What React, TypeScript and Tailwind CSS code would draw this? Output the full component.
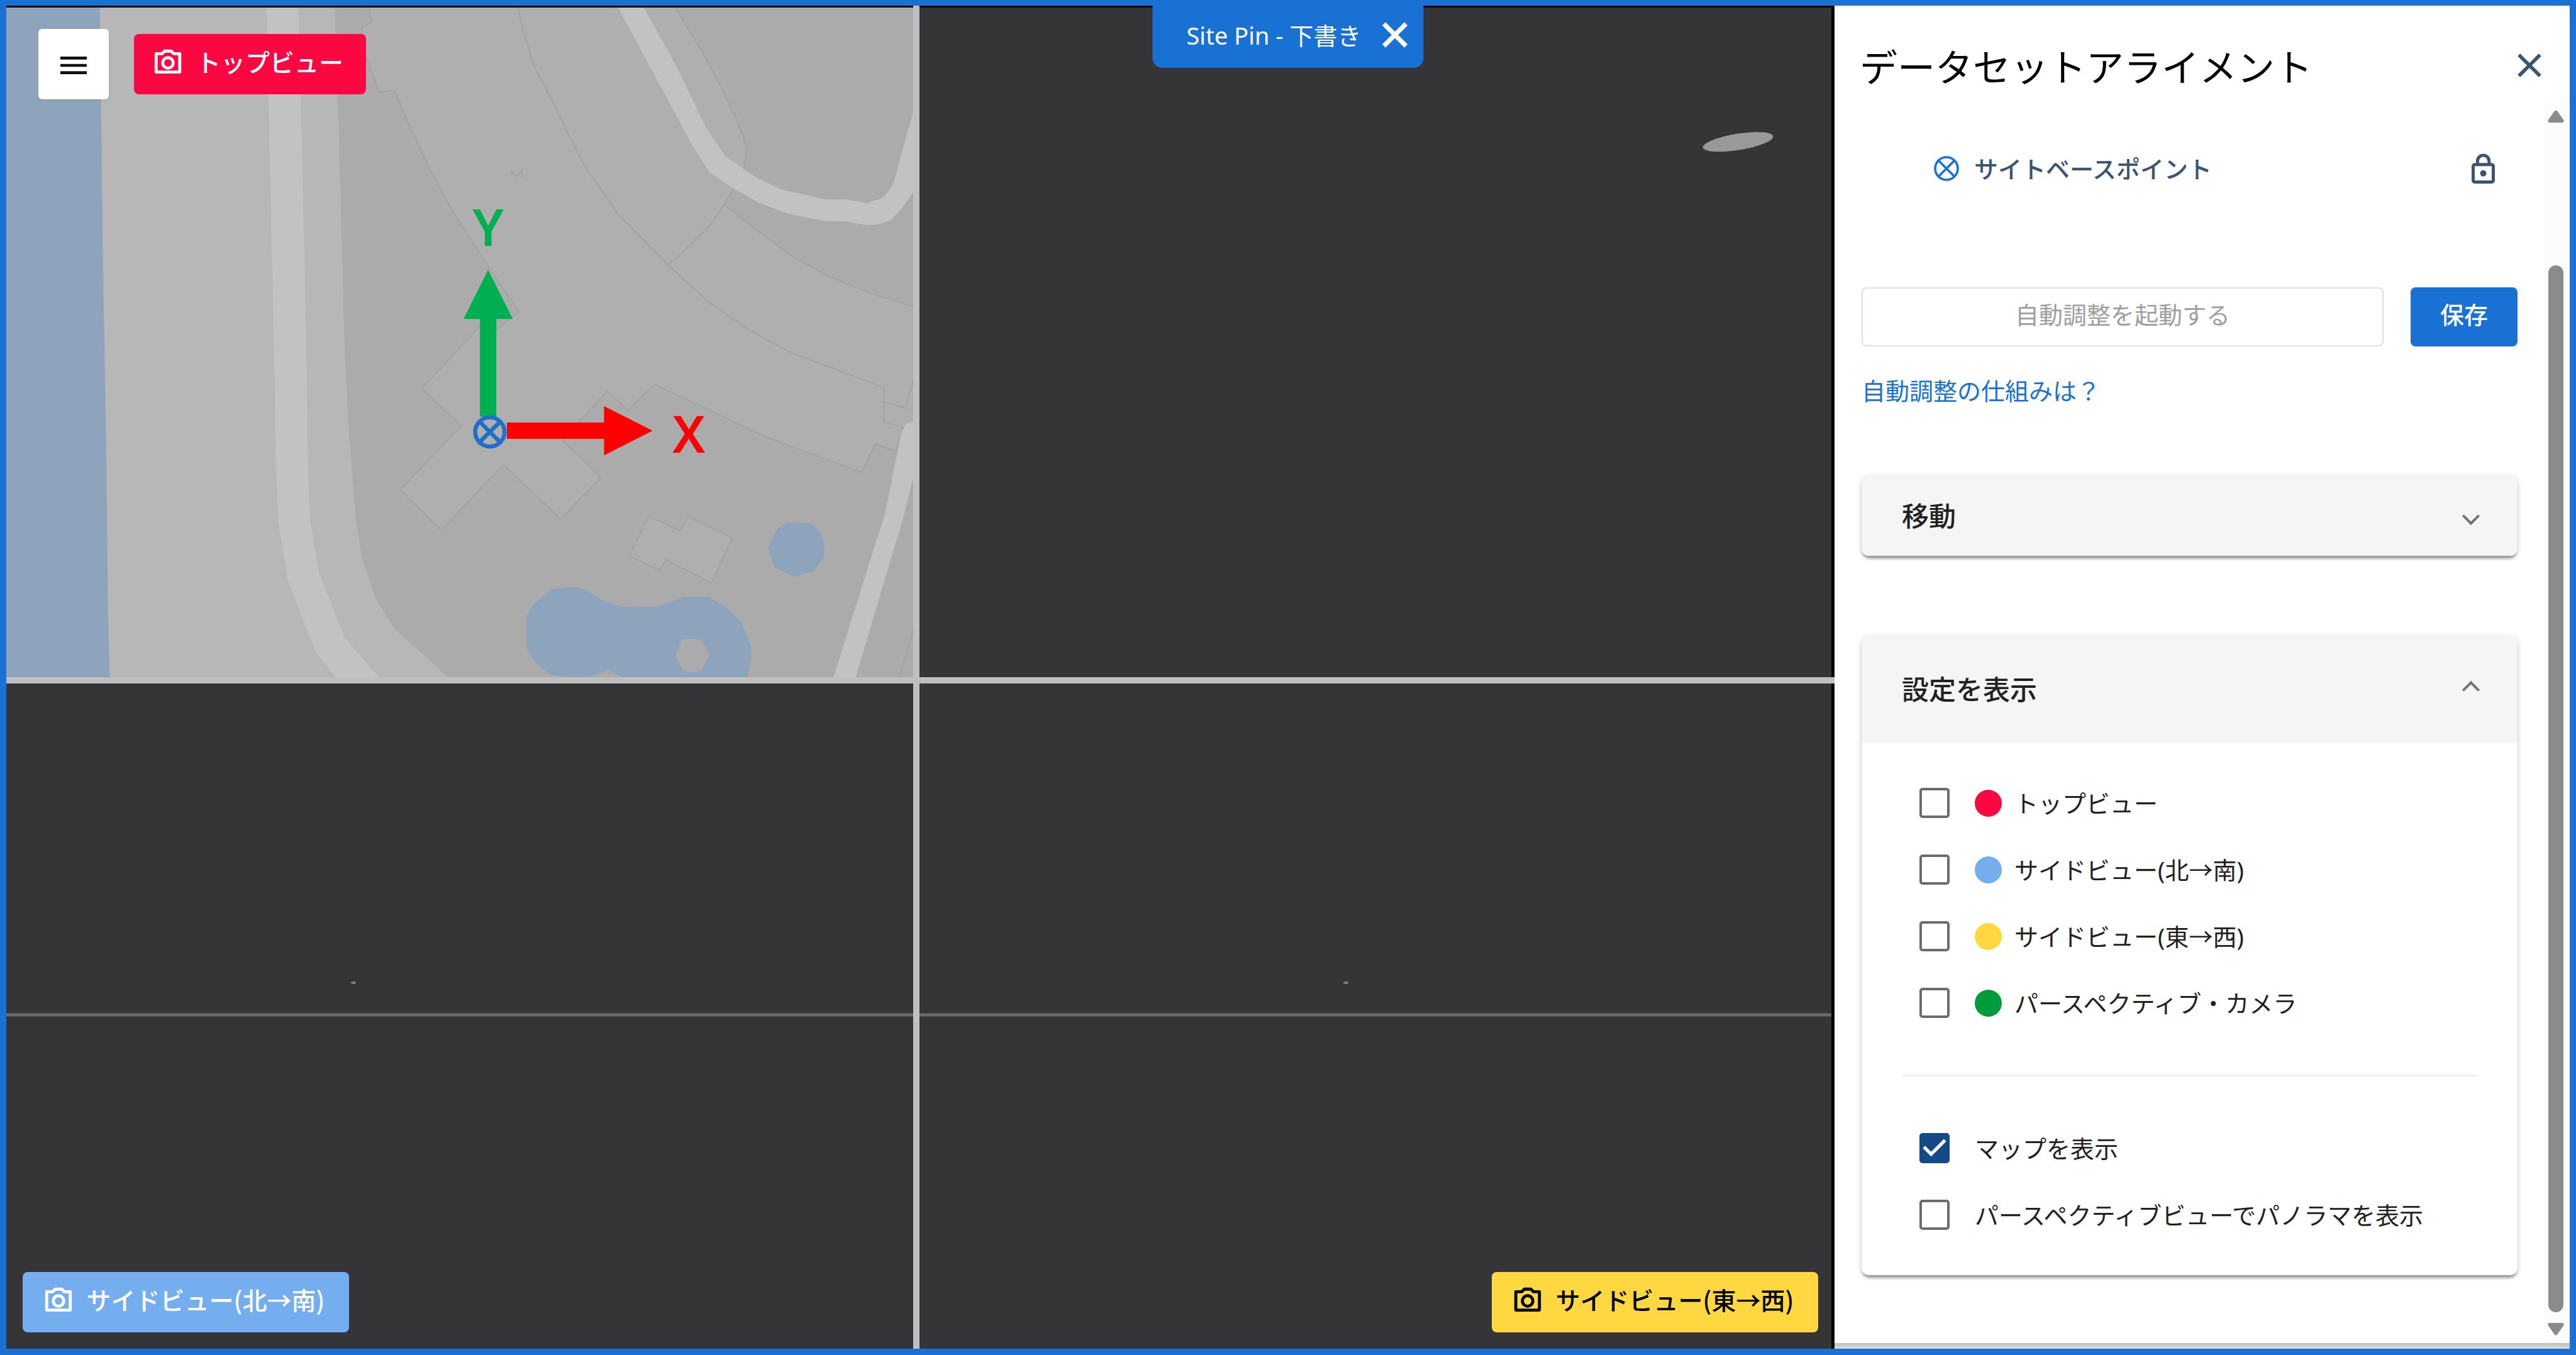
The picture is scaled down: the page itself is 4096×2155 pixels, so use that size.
import { useState } from "react";
import type { ReactNode } from "react";
import { MdMenu } from "react-icons/md";

interface ViewOption {
  id: string;
  label: string;
  dot?: string;
}

const VIEW_OPTIONS: ViewOption[] = [
  { id: "top", label: "トップビュー", dot: "bg-[#fb0842]" },
  { id: "side-ns", label: "サイドビュー(北→南)", dot: "bg-[#75aeef]" },
  { id: "side-ew", label: "サイドビュー(東→西)", dot: "bg-[#ffd740]" },
  { id: "perspective", label: "パースペクティブ・カメラ", dot: "bg-[#009c3b]" },
];

const LAYER_OPTIONS: ViewOption[] = [
  { id: "map", label: "マップを表示" },
  { id: "panorama", label: "パースペクティブビューでパノラマを表示" },
];

function CameraIcon() {
  return (
    <svg
      viewBox="0 0 24 24"
      className="size-[50px] shrink-0"
      fill="none"
      stroke="currentColor"
      strokeWidth="2.3"
      strokeLinejoin="round"
    >
      <path d="M3 5h4.600L9.450 3h5.100L16.400 5H21v14H3z" />
      <circle cx="12" cy="12" r="4" />
    </svg>
  );
}

function CloseIcon({ className, weight }: { className: string; weight: number }) {
  return (
    <svg viewBox="0 0 24 24" className={className} fill="none" stroke="currentColor" strokeWidth={weight}>
      <path d="M5.700 5.700l12.600 12.600M18.300 5.700L5.700 18.300" />
    </svg>
  );
}

function BasePointIcon({ className }: { className?: string }) {
  return (
    <svg viewBox="0 0 40 40" className={className} fill="none" stroke="#1871d3" strokeWidth="3.6">
      <circle cx="20" cy="20" r="18" />
      <path d="M7.5 7.5l25 25M32.5 7.5l-25 25" />
    </svg>
  );
}

function LockIcon() {
  return (
    <svg viewBox="0 0 40 52" className="h-12 w-[37px]" fill="none" stroke="#3b5470" strokeWidth="5.4">
      <rect x="2.7" y="19.3" width="34.6" height="30" rx="2.5" />
      <path d="M10.2 18v-4.9a9.9 9.9 0 0 1 19.8 0V18" />
      <circle cx="20" cy="34.3" r="5.4" fill="#3b5470" stroke="none" />
    </svg>
  );
}

function SiteMap() {
  return (
    <svg
      viewBox="11 13 1549 1144"
      preserveAspectRatio="none"
      className="absolute inset-0 h-full w-full"
      aria-hidden="true"
    >
      <rect x="0" y="0" width="1570" height="1170" fill="#ababab" />

      {/* building footprint */}
      <path
        d="M630 13L635 38L618 47L622 90L648 158L674 154L698 211L736 293L776 365L834 455L887 532L850 562L820 557L721 664L788 728L684 837L754 906L860 794L958 887L1026 816L962 753L985 726L1037 668L1072 701L1118 657L1219 704L1310 747L1472 807L1495 759L1531 771L1542 730L1561 720V524L1481 499L1411 470L1350 436L1290 391L1237 350L1255 320L1272 286L1275 256L1270 233L1244 173L1199 87L1153 13Z"
        fill="#afafaf"
      />
      <g fill="none" stroke="#a4a4a4" strokeWidth="2.500">
        <path d="M630 13L635 38L618 47L622 90L648 158L674 154L698 211L736 293L776 365L834 455L887 532L850 562L820 557L721 664L788 728L684 837L754 906L860 794L958 887L1026 816L962 753L985 726L1037 668L1072 701L1118 657L1219 704L1310 747L1472 807L1495 759L1531 771L1542 730L1510 720V662L1350 602L1280 564L1214 519L1142 453L1058 369L998 282L969 226L942 169L912 113L892 45L885 13" />
        <path d="M1510 686L1547 697L1561 647" />
        <path d="M1142 453L1184 414L1214 384L1237 350L1290 391L1350 436L1411 470L1481 499L1561 524" />
        <path d="M1153 13L1199 87L1244 173L1270 233L1275 256L1272 286L1255 320L1237 350" />
        <path d="M1561 1076L1536 1157" />
        <path d="M874 302V293L882 301L892 292V303" />
      </g>
      <path
        d="M1109 882L1162 907L1175 882L1251 919L1216 996L1138 956L1127 974L1075 950Z"
        fill="#afafaf"
        stroke="#a4a4a4"
        strokeWidth="2.500"
      />

      {/* shore */}
      <path
        d="M0 0H572V13L579 226L589 602L597 753L607 873L609 896L618 952L641 1020L672 1072L741 1135L776 1170H0Z"
        fill="#b7b7b7"
      />
      <path d="M0 0H171V13L175 376L181 722L185 1054L188 1170H0Z" fill="#8ea3bc" />

      {/* roads */}
      <g fill="#c2c2c2">
        <path d="M456 13L460 226L464 406L470 677L472 813L476 896L492 993L540 1114L576 1160H650L589 1090L545 978L530 888L527 828L522 527L516 256L510 13Z" />
        <path d="M1056 13L1118 128L1181 245L1211 293L1250 320L1295 346L1345 365L1411 378H1446L1481 385Q1505 384 1522 376L1542 354L1561 327V188L1542 256L1527 312Q1518 330 1506 339L1481 347L1446 341H1411L1335 324L1295 305L1239 267L1206 218L1159 120L1100 13Z" />
        <path d="M1561 721Q1551 720 1547 726L1540 738L1512 877L1423 1160H1461L1542 888L1561 813Z" />
      </g>

      {/* ponds */}
      <g fill="#8ea3bc">
        <path d="M1345 893H1368L1386 896L1400 907L1408 925V952L1391 975L1357 986L1323 969L1312 937L1328 903Z" />
        <path d="M942 1007L982 1002L1006 1010L1028 1025L1063 1037L1124 1036L1167 1020H1211L1239 1036L1267 1063L1284 1108L1283 1129L1276 1160H1070L1039 1145L1011 1155L977 1158L942 1153L915 1133L899 1105V1054L912 1031Z" />
      </g>
      <path d="M1164 1093L1180 1091L1197 1093L1212 1118L1199 1145L1184 1149L1167 1146L1154 1121Z" fill="#ababab" />

      {/* axes */}
      <path d="M820 712V545H792L834 461L876 545H848V712Z" fill="#00b050" />
      <path d="M866 722H1032V694L1115 736L1032 778V750H866Z" fill="#ff0000" />
      <g fill="none" stroke="#1f70c8" strokeWidth="7">
        <circle cx="837" cy="738" r="25" />
        <path d="M820 721l34 34M854 721l-34 34" />
      </g>
      <g className="font-semibold" fontFamily="'Noto Sans', sans-serif" fontSize="88" textAnchor="middle">
        <text x="834" y="420" fill="#00b050">
          Y
        </text>
        <text x="1177" y="773" fill="#ff0000">
          X
        </text>
      </g>
    </svg>
  );
}

function ViewButton({ className, children }: { className: string; children: ReactNode }) {
  return (
    <button
      type="button"
      className={`flex h-24 items-center justify-center gap-5 rounded-lg pr-9 pb-1 pl-[29px] font-['Noto_Sans_CJK_JP',sans-serif] text-[39px] font-medium ${className}`}
    >
      <CameraIcon />
      <span className="pb-1.5">{children}</span>
    </button>
  );
}

function Horizon({ className }: { className: string }) {
  return (
    <div className="absolute inset-x-0 top-[49.5%]">
      <div className="h-1.5 border-y border-[#505052] bg-[#69696b]" />
      <div className={`absolute -top-[50px] h-1 w-2 rounded-full bg-[#7a7a7c] ${className}`} />
    </div>
  );
}

function CheckRow({
  option,
  checked,
  onToggle,
}: {
  option: ViewOption;
  checked: boolean;
  onToggle: (id: string) => void;
}) {
  return (
    <label className="flex h-[106px] items-center gap-10 pl-7 text-[#212121]">
      <span className="relative size-12 shrink-0">
        <input
          type="checkbox"
          checked={checked}
          onChange={() => onToggle(option.id)}
          className="block size-12 appearance-none rounded-[5px] border-4 border-[#6c6c6c] bg-white checked:border-[#154a88] checked:bg-[#154a88]"
        />
        {checked && (
          <svg viewBox="3 3 18 18" className="pointer-events-none absolute inset-0 size-12" fill="#fff">
            <path d="M10 17l-5-5 1.41-1.41L10 14.17l7.59-7.59L19 8l-9 9z" />
          </svg>
        )}
      </span>
      <span className="flex items-center gap-5">
        {option.dot && <span className={`size-[43px] rounded-full ${option.dot}`} />}
        {option.label}
      </span>
    </label>
  );
}

function Accordion({
  title,
  open,
  onToggle,
  children,
}: {
  title: string;
  open: boolean;
  onToggle: () => void;
  children?: ReactNode;
}) {
  return (
    <section className="overflow-hidden rounded-xl bg-white shadow-[0_6px_4px_-2px_rgba(0,0,0,0.35),0_2px_8px_rgba(0,0,0,0.2)]">
      <button
        type="button"
        onClick={onToggle}
        aria-expanded={open}
        className={`flex w-full items-center justify-between bg-[#f5f5f5] px-16 text-left text-[43px] font-medium text-[#212121] ${
          open ? "h-[169px]" : "h-[127px]"
        }`}
      >
        {title}
        <span
          className={`size-5 border-r-4 border-b-4 border-[#757575] ${open ? "rotate-225" : "rotate-45"}`}
        />
      </button>
      {open && children}
    </section>
  );
}

export default function App() {
  const [checked, setChecked] = useState<string[]>(["map"]);
  const [moveOpen, setMoveOpen] = useState(false);
  const [displayOpen, setDisplayOpen] = useState(true);

  const toggle = (id: string) =>
    setChecked((prev) => (prev.includes(id) ? prev.filter((v) => v !== id) : [...prev, id]));

  return (
    <div className="relative flex h-screen w-full overflow-hidden border-[10px] border-t-[9px] border-[#1871d3] font-['Noto_Sans','Noto_Sans_CJK_JP',sans-serif] text-[38px] leading-[56px]">
      <main className="grid min-w-0 flex-1 grid-cols-[1442fr_1455fr] grid-rows-[1068fr_1058fr] gap-[10px] bg-[#bfbfbf]">
        <section className="relative min-h-0 overflow-hidden border-t-[3px] border-black">
          <SiteMap />
          <div className="relative flex items-center gap-10 pt-[34px] pl-[51px]">
            <button
              type="button"
              aria-label="メニュー"
              className="flex size-28 items-center justify-center rounded-md bg-white pt-1 text-[#111] shadow-sm"
            >
              <MdMenu className="size-14" />
            </button>
            <ViewButton className="bg-[#fb0842] text-white">トップビュー</ViewButton>
          </div>
        </section>

        <section className="relative min-h-0 overflow-hidden border-t-[3px] border-r-[5px] border-black bg-[#353537]">
          <svg viewBox="0 0 124 36" className="absolute top-[18.5%] left-[85.8%] w-[115px]">
            <ellipse cx="62" cy="18" rx="61" ry="14" fill="#999" transform="rotate(-9 62 18)" />
          </svg>
        </section>

        <section className="relative flex min-h-0 items-end overflow-hidden bg-[#353537] p-[26px]">
          <Horizon className="left-[38%]" />
          <ViewButton className="relative min-w-[519px] bg-[#75aeef] text-white">
            サイドビュー(北→南)
          </ViewButton>
        </section>

        <section className="relative flex min-h-0 items-end justify-end overflow-hidden border-r-[5px] border-black bg-[#353537] p-[26px] pr-[21px]">
          <Horizon className="left-[46.5%]" />
          <ViewButton className="relative min-w-[519px] bg-[#ffd740] text-black">
            サイドビュー(東→西)
          </ViewButton>
        </section>
      </main>

      <aside className="flex w-[1169px] shrink-0 flex-col bg-white">
        <header className="flex h-[153px] shrink-0 items-center justify-between pt-9 pr-8 pl-10">
          <h1 className="pt-1.5 text-[60px] leading-[80px] text-black">データセットアライメント</h1>
          <button type="button" aria-label="閉じる" className="text-[#3b5470]">
            <CloseIcon className="size-16" weight={2.1} />
          </button>
        </header>

        <div className="flex min-h-0 flex-1">
          <div className="min-w-0 flex-1 px-[43px] pt-16">
            <div className="flex h-[88px] items-center gap-6 pr-9 pb-1 pl-[115px] font-medium text-[#3b5470]">
              <BasePointIcon className="size-10" />
              <span className="flex-1">サイトベースポイント</span>
              <button type="button" aria-label="ロック">
                <LockIcon />
              </button>
            </div>

            <div className="mt-[143px] flex h-[94px] gap-[43px]">
              <button
                type="button"
                disabled
                className="flex-1 rounded-lg border-2 border-[#e0e0e0] pb-2 text-[#9e9e9e]"
              >
                自動調整を起動する
              </button>
              <button
                type="button"
                className="w-[170px] rounded-lg bg-[#1871d3] pb-2 font-medium text-white"
              >
                保存
              </button>
            </div>
            <a href="#auto-align" className="mt-[42px] block text-[#1871d3]">
              自動調整の仕組みは？
            </a>

            <div className="mt-[108px] flex flex-col gap-32">
              <Accordion title="移動" open={moveOpen} onToggle={() => setMoveOpen((v) => !v)} />
              <Accordion title="設定を表示" open={displayOpen} onToggle={() => setDisplayOpen((v) => !v)}>
                <div className="px-16 py-[43px]">
                  {VIEW_OPTIONS.map((o) => (
                    <CheckRow key={o.id} option={o} checked={checked.includes(o.id)} onToggle={toggle} />
                  ))}
                  <hr className="my-[61px] border-t-[3px] border-[#eeeeee]" />
                  {LAYER_OPTIONS.map((o) => (
                    <CheckRow key={o.id} option={o} checked={checked.includes(o.id)} onToggle={toggle} />
                  ))}
                </div>
              </Accordion>
            </div>
          </div>

          {/* scrollbar */}
          <div className="flex w-10 shrink-0 flex-col items-center bg-[#fcfcfc] pt-[13px] pr-1 pb-3">
            <svg viewBox="0 0 26 20" className="h-5 w-[26px] shrink-0" fill="#8b8b8b">
              <path d="M10.5 2Q13-1 15.500 2L25 15.500Q27 20 22.500 20H3.500Q-1 20 1 15.500Z" />
            </svg>
            <div className="mt-[227px] mb-[17px] w-6 flex-1 rounded-full bg-[#8b8b8b]" />
            <svg viewBox="0 0 26 20" className="h-5 w-[26px] shrink-0" fill="#8b8b8b">
              <path d="M10.5 18Q13 21 15.500 18L25 4.500Q27 0 22.500 0H3.500Q-1 0 1 4.500Z" />
            </svg>
          </div>
        </div>
        <div className="h-[9px] shrink-0 bg-linear-to-b from-[#bdbdbd] to-[#dedede]" />
      </aside>

      <div className="absolute top-0 left-1/2 z-10 flex h-[99px] -translate-x-1/2 items-center gap-5 rounded-b-2xl bg-[#1871d3] pr-3 pb-1.5 pl-[54px] text-white">
        <span>Site Pin - 下書き</span>
        <button type="button" aria-label="下書きを閉じる">
          <CloseIcon className="size-[67px]" weight={2.6} />
        </button>
      </div>
    </div>
  );
}
